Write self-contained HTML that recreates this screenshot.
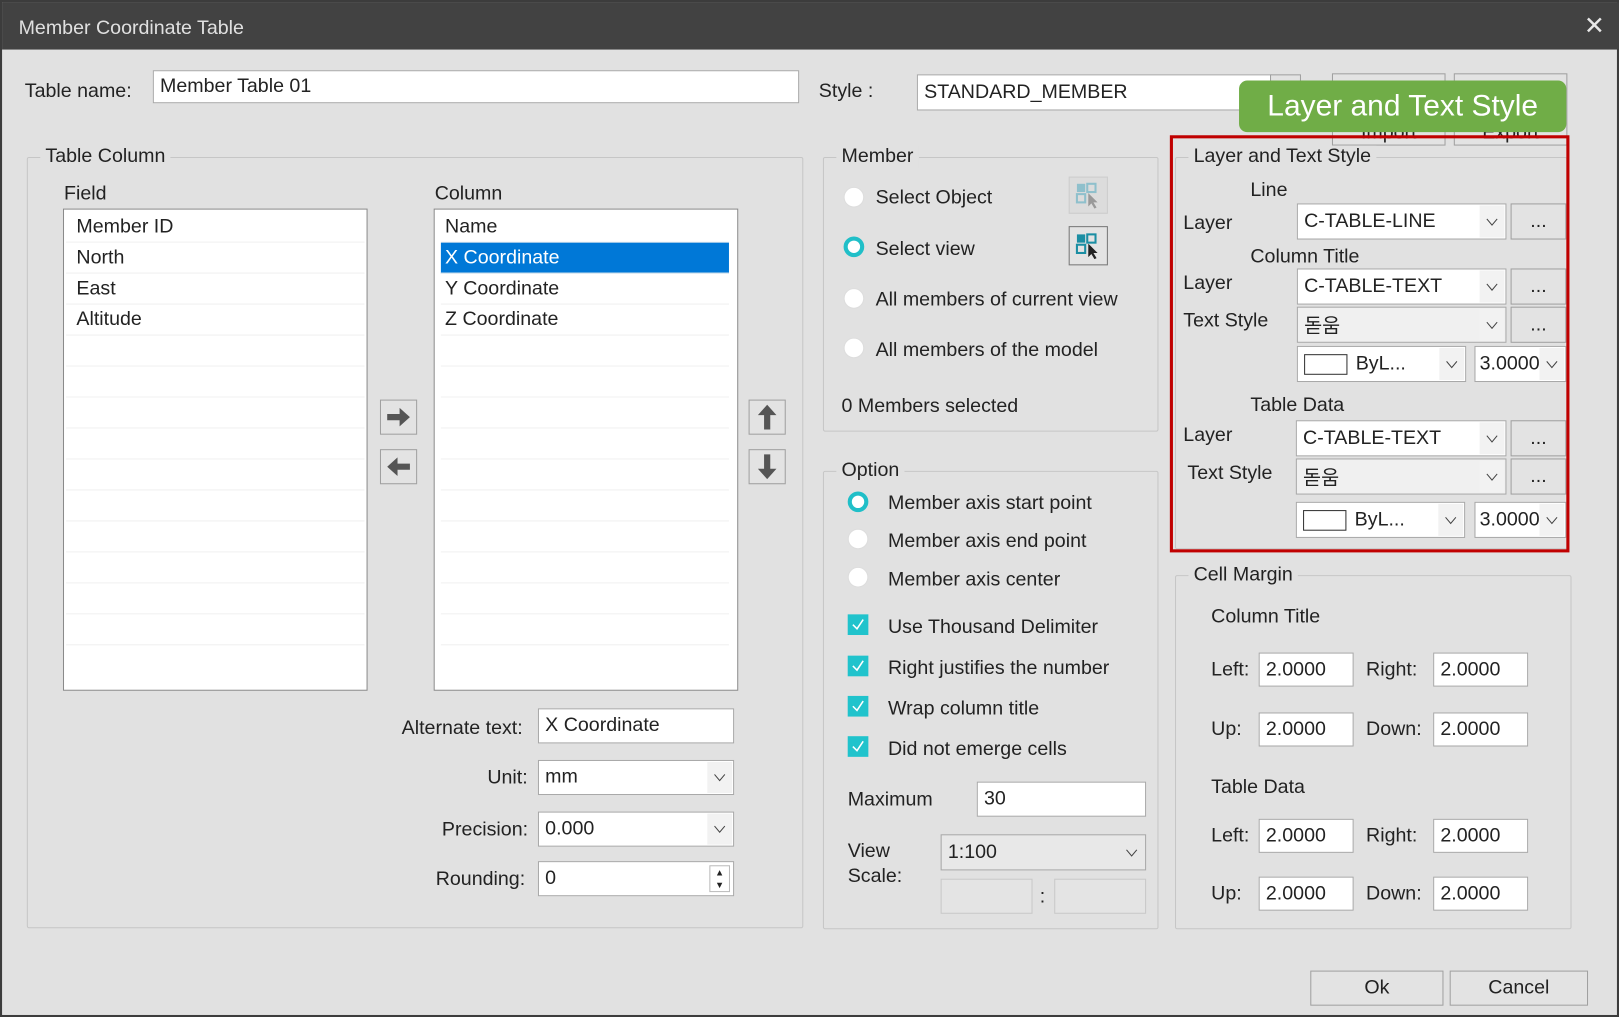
<!DOCTYPE html>
<html><head><meta charset="utf-8"><style>
*{box-sizing:border-box;margin:0;padding:0}
html,body{width:1619px;height:1017px;overflow:hidden;background:#e1e1e1}
#w{position:absolute;left:0;top:0;width:1568px;height:985px;transform:scale(1.03253);transform-origin:0 0;background:#e1e1e1;border:2px solid #3c3c3c;font-family:"Liberation Sans","Noto Sans CJK KR",sans-serif;font-size:19px;color:#222}
.a{position:absolute}
.t{position:absolute;white-space:nowrap;line-height:22px;transform:translateY(-11px)}
.in{position:absolute;background:#fff;border:1px solid #a8a8a8;padding-left:6px;white-space:nowrap;overflow:hidden;display:flex;align-items:center}
.cb:after{content:"";position:absolute;right:0;top:0;bottom:0;width:26px;background:#f0f0f0 url() ;}
.dd{position:absolute;right:1px;top:1px;bottom:1px;width:24px;background:#f2f2f2;display:flex;align-items:center;justify-content:center}
.dd svg{width:12px;height:8px}
.g{position:absolute;border:1px solid #c6c6c6;border-radius:2px}
.lg{position:absolute;top:-12px;left:12px;background:#e1e1e1;padding:0 5px;line-height:22px;white-space:nowrap}
.btn{position:absolute;background:#e3e3e3;border:1px solid #a0a0a0;display:flex;align-items:center;justify-content:center}
.rd{position:absolute;width:20px;height:20px;border-radius:50%;background:#fff;border:1px solid #ddd}
.rd.on{border:4px solid #20bfc8}
.ck{position:absolute;width:20px;height:20px;background:#20c3cc}
.row{height:30px;border-bottom:1px solid #f0f0f0;padding-left:10px;line-height:30px}
</style></head><body><div id="w">
<div class="a" style="left:0;top:0;width:1566px;height:46px;background:#424242"></div>
<div class="t" style="left:16px;top:26px;color:#e0e0e0">Member Coordinate Table</div>
<div class="t" style="left:1532px;top:24px;color:#e8e8e8;font-size:24px">✕</div>

<div class="t" style="left:22px;top:87px">Table name:</div>
<div class="in" style="left:146px;top:66px;width:626px;height:32px">Member Table 01</div>
<div class="t" style="left:791px;top:87px">Style :</div>
<div class="in" style="left:886px;top:70px;width:344px;height:35px">STANDARD_MEMBER</div>
<div class="btn" style="left:1228px;top:70px;width:30px;height:35px"></div>
<div class="btn" style="left:1288px;top:69px;width:110px;height:70px;align-items:flex-end">Import</div>
<div class="btn" style="left:1406px;top:69px;width:110px;height:70px;align-items:flex-end">Export</div>
<div class="a" style="left:1198px;top:76px;width:317px;height:50px;background:#70ad47;border-radius:8px;color:#fff;font-size:29px;display:flex;align-items:center;justify-content:center">Layer and Text Style</div>

<!-- Table Column -->
<div class="g" style="left:24px;top:150px;width:752px;height:747px"><span class="lg">Table Column</span></div>
<div class="t" style="left:60px;top:186px">Field</div>
<div class="a" style="left:59px;top:200px;width:295px;height:467px;background:#fff;border:1px solid #8a8a8a;padding:2px">
<div class="row">Member ID</div><div class="row">North</div><div class="row">East</div><div class="row">Altitude</div><div class="row"></div><div class="row"></div><div class="row"></div><div class="row"></div><div class="row"></div><div class="row"></div><div class="row"></div><div class="row"></div><div class="row"></div><div class="row"></div></div>
<div class="t" style="left:419px;top:186px">Column</div>
<div class="a" style="left:418px;top:200px;width:295px;height:467px;background:#fff;border:1px solid #8a8a8a;padding:2px 8px 2px 6px">
<div class="row" style="padding-left:4px">Name</div><div class="row" style="background:#0078d7;color:#fff;padding-left:4px">X Coordinate</div><div class="row" style="padding-left:4px">Y Coordinate</div><div class="row" style="padding-left:4px">Z Coordinate</div><div class="row"></div><div class="row"></div><div class="row"></div><div class="row"></div><div class="row"></div><div class="row"></div><div class="row"></div><div class="row"></div><div class="row"></div><div class="row"></div></div>
<div class="btn" style="left:366px;top:385px;width:36px;height:34px"><svg width="26" height="20"><path d="M2 7h12V1l10 9-10 9v-6H2z" fill="#555"/></svg></div>
<div class="btn" style="left:366px;top:433px;width:36px;height:34px"><svg width="26" height="20"><path d="M24 7H12V1L2 10l10 9v-6h12z" fill="#555"/></svg></div>
<div class="btn" style="left:723px;top:385px;width:36px;height:34px"><svg width="20" height="28"><path d="M7 26V12H1l9-10 9 10h-6v14z" fill="#555"/></svg></div>
<div class="btn" style="left:723px;top:433px;width:36px;height:34px"><svg width="20" height="28"><path d="M7 2v14H1l9 10 9-10h-6V2z" fill="#555"/></svg></div>
<div class="t" style="left:387px;top:704px">Alternate text:</div>
<div class="in" style="left:519px;top:684px;width:190px;height:34px">X Coordinate</div>
<div class="t" style="left:470px;top:752px">Unit:</div>
<div class="in" style="left:519px;top:734px;width:190px;height:34px">mm<span class="dd"><svg viewBox="0 0 12 8"><path d="M1 1l5 6 5-6" stroke="#444" fill="none"/></svg></span></div>
<div class="t" style="left:426px;top:802px">Precision:</div>
<div class="in" style="left:519px;top:784px;width:190px;height:34px">0.000<span class="dd"><svg viewBox="0 0 12 8"><path d="M1 1l5 6 5-6" stroke="#444" fill="none"/></svg></span></div>
<div class="t" style="left:420px;top:850px">Rounding:</div>
<div class="in" style="left:519px;top:832px;width:190px;height:34px">0<span class="a" style="right:3px;top:3px;width:20px;height:26px;border:1px solid #bbb;font-size:9px;line-height:12px;text-align:center">▲<br>▼</span></div>

<!-- Member -->
<div class="g" style="left:795px;top:150px;width:325px;height:266px"><span class="lg">Member</span></div>
<div class="rd" style="left:815px;top:179px"></div><div class="t" style="left:846px;top:190px">Select Object</div>
<div class="rd on" style="left:815px;top:227px"></div><div class="t" style="left:846px;top:240px">Select view</div>
<div class="rd" style="left:815px;top:277px"></div><div class="t" style="left:846px;top:289px">All members of current view</div>
<div class="rd" style="left:815px;top:325px"></div><div class="t" style="left:846px;top:338px">All members of the model</div>
<div class="t" style="left:813px;top:392px">0 Members selected</div>
<div class="btn" style="left:1033px;top:169px;width:38px;height:36px;background:#dcdcdc;border-color:#ccc"><svg width="26" height="26"><rect x="2" y="2" width="8" height="8" fill="#8fc0cc"/><rect x="12" y="2" width="8" height="8" fill="none" stroke="#8fc0cc" stroke-width="2"/><rect x="2" y="12" width="8" height="8" fill="none" stroke="#8fc0cc" stroke-width="2"/><path d="M13 11l0 13 3-3 3 5 2-1-3-5h4z" fill="#999"/></svg></div>
<div class="btn" style="left:1033px;top:217px;width:38px;height:38px;border-color:#777"><svg width="26" height="26"><rect x="2" y="2" width="8" height="8" fill="#1b8ea3"/><rect x="12" y="2" width="8" height="8" fill="none" stroke="#1b8ea3" stroke-width="2"/><rect x="2" y="12" width="8" height="8" fill="none" stroke="#1b8ea3" stroke-width="2"/><path d="M13 11l0 13 3-3 3 5 2-1-3-5h4z" fill="#222"/></svg></div>

<!-- Option -->
<div class="g" style="left:795px;top:454px;width:325px;height:444px"><span class="lg">Option</span></div>
<div class="rd on" style="left:819px;top:474px"></div><div class="t" style="left:858px;top:486px">Member axis start point</div>
<div class="rd" style="left:819px;top:510px"></div><div class="t" style="left:858px;top:523px">Member axis end point</div>
<div class="rd" style="left:819px;top:547px"></div><div class="t" style="left:858px;top:560px">Member axis center</div>
<div class="ck" style="left:819px;top:593px"><svg width="20" height="20"><path d="M5 10l4 4 6-9" stroke="#fff" stroke-width="1.5" fill="none"/></svg></div><div class="t" style="left:858px;top:606px">Use Thousand Delimiter</div>
<div class="ck" style="left:819px;top:633px"><svg width="20" height="20"><path d="M5 10l4 4 6-9" stroke="#fff" stroke-width="1.5" fill="none"/></svg></div><div class="t" style="left:858px;top:646px">Right justifies the number</div>
<div class="ck" style="left:819px;top:672px"><svg width="20" height="20"><path d="M5 10l4 4 6-9" stroke="#fff" stroke-width="1.5" fill="none"/></svg></div><div class="t" style="left:858px;top:685px">Wrap column title</div>
<div class="ck" style="left:819px;top:711px"><svg width="20" height="20"><path d="M5 10l4 4 6-9" stroke="#fff" stroke-width="1.5" fill="none"/></svg></div><div class="t" style="left:858px;top:724px">Did not emerge cells</div>
<div class="t" style="left:819px;top:773px">Maximum</div>
<div class="in" style="left:944px;top:755px;width:164px;height:34px">30</div>
<div class="t" style="left:819px;top:823px">View</div><div class="t" style="left:819px;top:847px">Scale:</div>
<div class="in" style="left:909px;top:806px;width:199px;height:35px;background:#e8e8e8">1:100<span class="dd" style="background:#e8e8e8"><svg viewBox="0 0 12 8"><path d="M1 1l5 6 5-6" stroke="#444" fill="none"/></svg></span></div>
<div class="in" style="left:909px;top:849px;width:89px;height:34px;background:#e4e4e4;border-color:#c8c8c8"></div>
<div class="t" style="left:1005px;top:867px">:</div>
<div class="in" style="left:1019px;top:849px;width:89px;height:34px;background:#e4e4e4;border-color:#c8c8c8"></div>

<!-- Layer and Text Style -->
<div class="g" style="left:1136px;top:150px;width:380px;height:380px"><span class="lg">Layer and Text Style</span></div>
<div class="t" style="left:1209px;top:183px">Line</div>
<div class="t" style="left:1144px;top:215px">Layer</div>
<div class="in" style="left:1254px;top:195px;width:203px;height:35px">C-TABLE-LINE<span class="dd"><svg viewBox="0 0 12 8"><path d="M1 1l5 6 5-6" stroke="#444" fill="none"/></svg></span></div>
<div class="btn" style="left:1461px;top:195px;width:54px;height:35px">...</div>
<div class="t" style="left:1209px;top:247px">Column Title</div>
<div class="t" style="left:1144px;top:273px">Layer</div>
<div class="in" style="left:1254px;top:258px;width:203px;height:35px">C-TABLE-TEXT<span class="dd"><svg viewBox="0 0 12 8"><path d="M1 1l5 6 5-6" stroke="#444" fill="none"/></svg></span></div>
<div class="btn" style="left:1461px;top:258px;width:54px;height:35px">...</div>
<div class="t" style="left:1144px;top:309px">Text Style</div>
<div class="in" style="left:1254px;top:295px;width:203px;height:35px;background:#f0f0f0">돋움<span class="dd"><svg viewBox="0 0 12 8"><path d="M1 1l5 6 5-6" stroke="#444" fill="none"/></svg></span></div>
<div class="btn" style="left:1461px;top:295px;width:54px;height:35px">...</div>
<div class="in" style="left:1254px;top:333px;width:164px;height:35px"><span style="display:inline-block;width:42px;height:20px;border:1px solid #333;margin-right:8px"></span>ByL...<span class="dd"><svg viewBox="0 0 12 8"><path d="M1 1l5 6 5-6" stroke="#444" fill="none"/></svg></span></div>
<div class="in" style="left:1426px;top:333px;width:89px;height:35px;padding-left:4px">3.0000<span class="dd"><svg viewBox="0 0 12 8"><path d="M1 1l5 6 5-6" stroke="#444" fill="none"/></svg></span></div>
<div class="t" style="left:1209px;top:391px">Table Data</div>
<div class="t" style="left:1144px;top:420px">Layer</div>
<div class="in" style="left:1253px;top:405px;width:204px;height:35px">C-TABLE-TEXT<span class="dd"><svg viewBox="0 0 12 8"><path d="M1 1l5 6 5-6" stroke="#444" fill="none"/></svg></span></div>
<div class="btn" style="left:1461px;top:405px;width:54px;height:35px">...</div>
<div class="t" style="left:1148px;top:457px">Text Style</div>
<div class="in" style="left:1253px;top:442px;width:204px;height:35px;background:#f0f0f0">돋움<span class="dd"><svg viewBox="0 0 12 8"><path d="M1 1l5 6 5-6" stroke="#444" fill="none"/></svg></span></div>
<div class="btn" style="left:1461px;top:442px;width:54px;height:35px">...</div>
<div class="in" style="left:1253px;top:484px;width:164px;height:35px"><span style="display:inline-block;width:42px;height:20px;border:1px solid #333;margin-right:8px"></span>ByL...<span class="dd"><svg viewBox="0 0 12 8"><path d="M1 1l5 6 5-6" stroke="#444" fill="none"/></svg></span></div>
<div class="in" style="left:1426px;top:484px;width:89px;height:35px;padding-left:4px">3.0000<span class="dd"><svg viewBox="0 0 12 8"><path d="M1 1l5 6 5-6" stroke="#444" fill="none"/></svg></span></div>
<div class="a" style="left:1131px;top:129px;width:387px;height:404px;border:3px solid #c00000"></div>

<!-- Cell Margin -->
<div class="g" style="left:1136px;top:555px;width:384px;height:343px"><span class="lg">Cell Margin</span></div>
<div class="t" style="left:1171px;top:596px">Column Title</div>
<div class="t" style="left:1171px;top:647px">Left:</div><div class="in" style="left:1217px;top:630px;width:92px;height:33px">2.0000</div>
<div class="t" style="left:1321px;top:647px">Right:</div><div class="in" style="left:1386px;top:630px;width:92px;height:33px">2.0000</div>
<div class="t" style="left:1171px;top:705px">Up:</div><div class="in" style="left:1217px;top:688px;width:92px;height:33px">2.0000</div>
<div class="t" style="left:1321px;top:705px">Down:</div><div class="in" style="left:1386px;top:688px;width:92px;height:33px">2.0000</div>
<div class="t" style="left:1171px;top:761px">Table Data</div>
<div class="t" style="left:1171px;top:808px">Left:</div><div class="in" style="left:1217px;top:791px;width:92px;height:33px">2.0000</div>
<div class="t" style="left:1321px;top:808px">Right:</div><div class="in" style="left:1386px;top:791px;width:92px;height:33px">2.0000</div>
<div class="t" style="left:1171px;top:864px">Up:</div><div class="in" style="left:1217px;top:847px;width:92px;height:33px">2.0000</div>
<div class="t" style="left:1321px;top:864px">Down:</div><div class="in" style="left:1386px;top:847px;width:92px;height:33px">2.0000</div>

<div class="btn" style="left:1267px;top:938px;width:129px;height:34px">Ok</div>
<div class="btn" style="left:1402px;top:938px;width:134px;height:34px">Cancel</div>
</div></body></html>
